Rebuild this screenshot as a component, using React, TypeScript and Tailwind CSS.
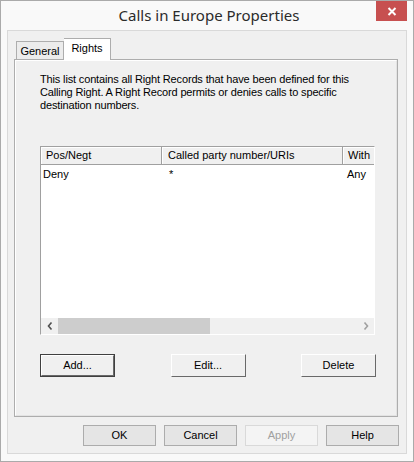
import React from 'react';

const ui = { fontFamily: '"Liberation Sans", Arial, sans-serif' };

// Classic raised 3D push button (inside the tab page)
const ClassicButton: React.FC<{ label: string; isDefault?: boolean; className?: string }> = ({ label, isDefault, className = '' }) => (
    <div className={`h-[23px] w-[75px] ${isDefault ? 'border border-[#404040]' : ''} ${className}`}>
        <div className="h-full w-full border-t border-l border-white border-b border-r border-b-[#696969] border-r-[#696969] bg-[#f0f0f0] flex items-center justify-center text-[11px] text-black">
            {label}
        </div>
    </div>
);

// Flat Windows 8 style button (dialog footer)
const FlatButton: React.FC<{ label: string; disabled?: boolean }> = ({ label, disabled }) => (
    <div
        className={`h-[21px] w-[73px] flex items-center justify-center text-[11px] border ${
            disabled ? 'border-[#d9d9d9] bg-[#f4f4f4] text-[#a0a0a0]' : 'border-[#acacac] bg-[#e5e5e5] text-black'
        }`}
    >
        {label}
    </div>
);

export default function App() {
    return (
        <div style={ui} className="w-[414px] h-[462px] border border-[#aaaaaa] bg-[#f9f9f9] flex flex-col">
            {/* Title bar */}
            <div className="relative h-[29px] flex items-center justify-center">
                <span className="text-[15px] text-[#2b2b2b] pl-[4px]" style={{ fontFamily: '"Noto Sans", "Open Sans", sans-serif' }}>
                    Calls in Europe Properties
                </span>
                <div className="absolute right-[6px] top-0 w-[31px] h-[20px] bg-[#c75050] flex items-center justify-center">
                    <svg width="10" height="9" viewBox="0 0 10 9">
                        <path d="M1.5 1 L8.5 8 M8.5 1 L1.5 8" stroke="#ffffff" strokeWidth="2" />
                    </svg>
                </div>
            </div>

            {/* Client area */}
            <div className="mx-[6px] h-[424px] border border-[#d9d9d9] bg-[#f0f0f0] flex flex-col">
                <div className="pt-[7px] pl-[6px] pr-[8px]">
                    {/* Tabs */}
                    <div className="flex items-end h-[21px] pl-[2px] relative z-10">
                        <div className="h-[18px] w-[48px] border border-b-0 border-[#adadad] bg-[#ececec] flex items-center justify-center text-[11px] pt-[2px]">
                            General
                        </div>
                        <div className="h-[22px] w-[47px] -mb-[1px] border border-b-0 border-[#adadad] border-l-0 bg-white flex items-center justify-center text-[11px] pb-[3px]">
                            Rights
                        </div>
                    </div>

                    {/* Tab page */}
                    <div className="h-[358px] border border-[#adadad] bg-[#f0f0f0]">
                        <div className="h-full border border-white border-r-[#e3e3e3] border-b-[#e3e3e3] pl-[24px] pr-[22px] pt-[12px] flex flex-col">
                            <p className="text-[11px] leading-[13px] tracking-[-0.15px] text-black w-[330px]">
                                This list contains all Right Records that have been defined for this Calling Right. A Right Record permits or denies calls to specific destination numbers.
                            </p>

                            {/* List view */}
                            <div className="mt-[34px] h-[189px] w-[335px] border-t border-l border-[#a0a0a0] border-r border-b border-r-white border-b-white bg-white flex flex-col overflow-hidden">
                                <div className="flex h-[18px] text-[11px] shrink-0">
                                    <div className="w-[121px] h-full border-r border-b border-[#a0a0a0] bg-[#f0f0f0] shadow-[inset_1px_1px_0_#ffffff] pl-[5px] flex items-center">Pos/Negt</div>
                                    <div className="w-[181px] h-full border-r border-b border-[#a0a0a0] bg-[#f0f0f0] shadow-[inset_1px_1px_0_#ffffff] pl-[6px] flex items-center">Called party number/URIs</div>
                                    <div className="flex-1 h-full border-b border-[#a0a0a0] bg-[#f0f0f0] shadow-[inset_1px_1px_0_#ffffff] pl-[5px] flex items-center">With</div>
                                </div>
                                <div className="flex h-[18px] text-[11px] items-center">
                                    <div className="w-[122px] pl-[2px]">Deny</div>
                                    <div className="w-[182px] pl-[6px]">*</div>
                                    <div className="flex-1 pl-[2px]">Any</div>
                                </div>
                                <div className="flex-1" />
                                {/* Horizontal scrollbar */}
                                <div className="h-[16px] flex items-center bg-[#f0f0f0] shrink-0">
                                    <div className="w-[17px] h-full flex items-center justify-center">
                                        <svg width="6" height="8" viewBox="0 0 6 8">
                                            <path d="M4.5 0.5 L1.5 4 L4.5 7.5" stroke="#505050" strokeWidth="1.6" fill="none" />
                                        </svg>
                                    </div>
                                    <div className="w-[152px] h-full bg-[#cdcdcd]" />
                                    <div className="flex-1" />
                                    <div className="w-[17px] h-full flex items-center justify-center">
                                        <svg width="6" height="8" viewBox="0 0 6 8">
                                            <path d="M1.5 0.5 L4.5 4 L1.5 7.5" stroke="#a0a0a0" strokeWidth="1.6" fill="none" />
                                        </svg>
                                    </div>
                                </div>
                            </div>

                            {/* Action buttons */}
                            <div className="mt-[19px] w-[336px] flex justify-between">
                                <ClassicButton label="Add..." isDefault />
                                <ClassicButton label="Edit..." />
                                <ClassicButton label="Delete" />
                            </div>
                        </div>
                    </div>
                </div>

                {/* Footer */}
                <div className="mt-[8px] pr-[7px] flex justify-end gap-[8px]">
                    <FlatButton label="OK" />
                    <FlatButton label="Cancel" />
                    <FlatButton label="Apply" disabled />
                    <FlatButton label="Help" />
                </div>
            </div>
        </div>
    );
}
